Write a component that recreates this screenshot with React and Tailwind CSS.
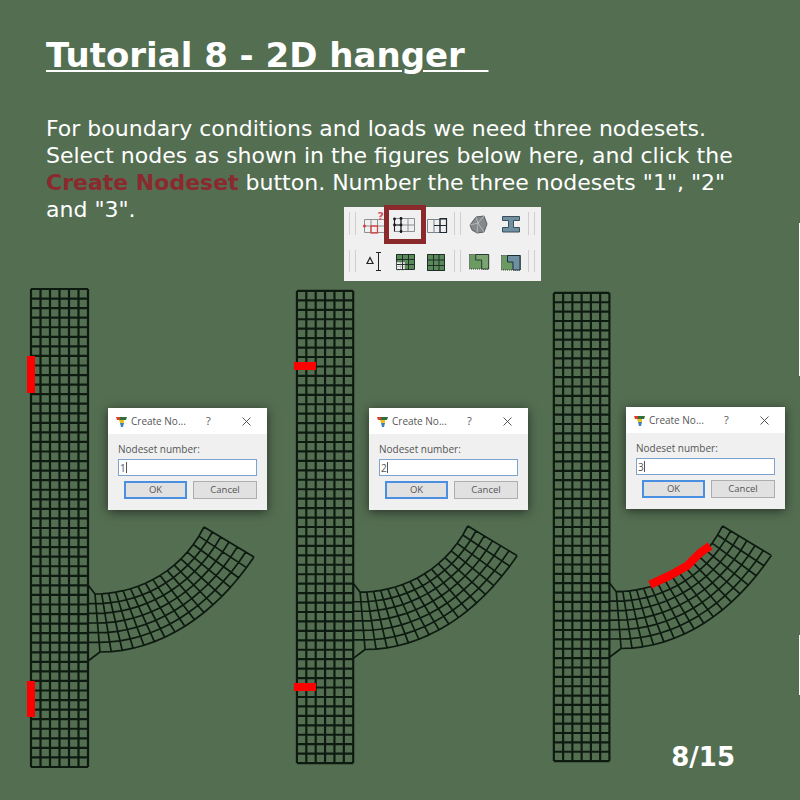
import React from 'react';

const MESH = '#0d1a10';

// cubic bezier point
const bez = (p, t) => {
  const u = 1 - t;
  return [0, 1].map(i =>
    u * u * u * p[0][i] + 3 * u * u * t * p[1][i] + 3 * u * t * t * p[2][i] + t * t * t * p[3][i]
  );
};

const TOP = [[95, 594], [130, 594], [178, 578], [204, 527]];
const BOTTOM = [[100, 652], [160, 652], [215, 615], [254, 557]];
const COLS = 16;
const ROWS = 6;

const buildBranch = () => {
  const lines = [];
  const node = (c, r) => {
    if (c === -1) {
      if (r === 0) return [88, 585];
      if (r === ROWS) return [88, 661];
      return [88, 594 + (58 * r) / ROWS];
    }
    const a = bez(TOP, c / COLS);
    const b = bez(BOTTOM, c / COLS);
    return [a[0] + ((b[0] - a[0]) * r) / ROWS, a[1] + ((b[1] - a[1]) * r) / ROWS];
  };
  for (let r = 0; r <= ROWS; r++) {
    const pts = [];
    for (let c = -1; c <= COLS; c++) pts.push(node(c, r).map(v => v.toFixed(1)).join(','));
    lines.push('M' + pts.join('L'));
  }
  for (let c = 0; c <= COLS; c++) {
    lines.push(`M${node(c, 0).join(',')}L${node(c, ROWS).join(',')}`);
  }
  return lines.join('');
};

const buildStrip = () => {
  let d = '';
  for (let c = 0; c <= 6; c++) {
    const x = 31 + c * 9.5;
    d += `M${x},289V767`;
  }
  for (let r = 0; r <= 50; r++) {
    const y = 289 + r * 9.56;
    d += `M31,${y}H88`;
  }
  return d;
};

const STRIP = buildStrip();
const BRANCH = buildBranch();

// drawn in the coordinates of the first figure, red selection passed as children
const Mesh = ({ children }) => (
  <svg className="h-full w-full" viewBox="25 283 240 490" preserveAspectRatio="none" fill="none">
    <path d={STRIP} stroke={MESH} strokeWidth="2.2" />
    <path d={BRANCH} stroke={MESH} strokeWidth="1.7" strokeLinejoin="round" />
    {children}
  </svg>
);

const Dialog = ({ value, className }) => (
  <div className={`absolute flex w-[159px] h-[102px] flex-col bg-[#f0f0f0] shadow-[0_2px_10px_rgba(0,0,0,0.55)] font-['Open_Sans',sans-serif] text-[9.5px] text-[#555] ${className}`}>
    <div className="flex h-[26px] items-center bg-white pl-2">
      <svg className="h-[11px] w-[11px]" viewBox="0 0 11 11">
        <path d="M0 1h4v3H1z" fill="#d8402c" />
        <path d="M4 1h7l-1 3H4z" fill="#2f6f3a" />
        <path d="M3 4h5v3H4z" fill="#e8c020" />
        <path d="M4 7h4l-1 4H5z" fill="#3f7fc0" />
      </svg>
      <span className="ml-[4px] w-[75px] text-[10px]">Create No...</span>
      <span className="w-[36px] text-[11px]">?</span>
      <svg className="h-[9px] w-[9px]" viewBox="0 0 9 9" stroke="#444" strokeWidth="0.9">
        <path d="M0.5 0.5l8 8M8.5 0.5l-8 8" />
      </svg>
    </div>
    <div className="flex flex-col px-[10px] pt-[8px]">
      <span className="h-[17px] leading-[14px] text-[10px]">Nodeset number:</span>
      <div className="flex h-[17px] items-center border border-[#7da2ce] bg-white pl-[1px] text-[10px] leading-none">
        {value}<span className="ml-[0.5px] h-[11px] w-px bg-[#555]" />
      </div>
      <div className="mt-[5px] flex gap-[6px] pl-[6px]">
        <div className="flex h-[18px] w-[63px] items-center justify-center border-2 border-[#4b8fe0] bg-[#e1e1e1] pt-px">OK</div>
        <div className="flex h-[18px] w-[64px] items-center justify-center border border-[#adadad] bg-[#e1e1e1] pt-px">Cancel</div>
      </div>
    </div>
  </div>
);

const Toolbar = () => (
  <div className="relative z-10 -mt-[16px] ml-[344px] h-[74px] w-[197px] bg-[#f0f0f0]">
    <svg className="h-full w-full" viewBox="0 0 197 74" fill="none">
      {/* separators */}
      <path d="M5.5 5v23M11.5 5v23M110.5 5v23M116.5 5v23M184.5 5v23M190.5 5v23M5.5 43v22M11.5 43v22M110.5 43v22M116.5 43v22M184.5 43v22M190.5 43v22" stroke="#cfcfcf" />
      {/* add nodeset */}
      <path d="M20.5 12.5h20v13h-20zM27 12.5v13M33.5 12.5v13M20.5 19h20" stroke="#8a8f92" />
      <rect x="27" y="19" width="6.5" height="7" stroke="#e0393a" strokeWidth="1.2" />
      <circle cx="20.5" cy="19" r="1.5" fill="#e0393a" />
      <text x="33.5" y="13" fontFamily="'DejaVu Sans',sans-serif" fontSize="11" fontWeight="700" fill="#d9555a">?</text>
      {/* create nodeset */}
      <path d="M50.5 11.5h20v13h-20zM57 11.5v13M64 11.5v13M50.5 18h20" stroke="#8a9094" />
      <path d="M50.5 11.5v13M57 10v16M50.5 18h7" stroke="#222" strokeWidth="1.1" />
      <circle cx="50.5" cy="12" r="1.4" fill="#1a1a1a" />
      <circle cx="50.5" cy="18" r="1.4" fill="#1a1a1a" />
      <circle cx="57" cy="11.5" r="1.4" fill="#1a1a1a" />
      <circle cx="57" cy="18" r="1.4" fill="#1a1a1a" />
      <circle cx="57" cy="24.5" r="1.4" fill="#1a1a1a" />
      {/* create elset */}
      <path d="M83.5 12.5h19v13h-19zM90 12.5v13M96 12.5v13" stroke="#7c8286" />
      <path d="M90 18.5h12.5M96 11.5h6.5v14H96zM96 11.5v14" stroke="#1f2a30" strokeWidth="1.2" />
      {/* rock */}
      <path d="M126 18l6-8 8-1 3 8-3 8-7 1-5-3z" fill="#85898c" stroke="#5c6063" />
      <path d="M132 10l2 6 6-7M134 16l-8 2M134 16l6 9M134 16l-1 10" stroke="#c9cccd" strokeWidth="0.7" />
      {/* I-beam */}
      <path d="M158.5 9.5h17v4h-6v7h6v4.5h-17V20.500h6v-7h-6z" fill="#6f8fa3" stroke="#3c4f5b" />
      {/* measure */}
      <path d="M26 50.500l3 6h-6z" stroke="#222" strokeWidth="1.2" />
      <path d="M32 45.500h5M34.500 45.500v18M32 63.500h5" stroke="#222" strokeWidth="1" />
      {/* green grid with selection */}
      <rect x="52" y="47" width="19" height="15" fill="#5a8a5a" />
      <rect x="52" y="55" width="9" height="8" fill="#f0f0f0" />
      <path d="M52.500 47.500h18v15h-18zM58.500 47.500v15M64.500 47.500v15M52.500 52.500h18M52.500 57.500h18" stroke="#1f2f28" />
      <path d="M52.500 55.500h8v7.500h-8zM52.500 59.500h8M56.500 55.500v8" stroke="#888" strokeWidth="0.7" strokeDasharray="1 1" />
      {/* green grid */}
      <rect x="83" y="47" width="18" height="17" fill="#5a8a5a" />
      <path d="M83.500 47.500h17v16h-17zM89.500 47.500v16M95 47.500v16M83.500 53h17M83.500 58.500h17" stroke="#1f2f28" />
      {/* split region, both parts green */}
      <path d="M125.500 47.500h19v14.500h-19z" fill="#6b9a62" stroke="#333" strokeDasharray="1 1" />
      <path d="M131.700 47.500h13v14.500h-7v-9h-6z" fill="#7aa571" stroke="#2a3a36" />
      {/* split region, blue part */}
      <path d="M157.500 48.500h19v14.500h-19z" fill="#6b9a62" stroke="#333" strokeDasharray="1 1" />
      <path d="M163.500 48.500h12.500v14.500h-7v-8h-5.500z" fill="#6f8fa3" stroke="#1f2f38" />
    </svg>
    <div className="absolute left-[40px] top-[-2px] h-[39px] w-[42px] border-[5px] border-[#8a2a2c]" />
  </div>
);

export default function App() {
  return (
    <div className="relative flex h-[800px] w-[800px] flex-col overflow-hidden bg-[#546e52] pt-[33px] font-['DejaVu_Sans',sans-serif] text-white">
      <h1 className="ml-[46px] h-[44px] text-[34px] font-bold leading-[44px] underline decoration-[2px] underline-offset-[3px] whitespace-pre">
        {'Tutorial 8 - 2D hanger\u00a0\u00a0'}
      </h1>
      <p className="ml-[46px] mt-[38px] w-[740px] text-[22px] leading-[27px]">
        For boundary conditions and loads we need three nodesets.<br />
        Select nodes as shown in the figures below here, and click the<br />
        <span className="font-bold text-[#8a2a2e]">Create Nodeset</span> button. Number the three nodesets "1", "2"<br />
        and "3".
      </p>

      <Toolbar />

      <div className="flex items-start pl-[25px] pt-[2px]">
        <div className="relative h-[490px] w-[240px]">
          <Mesh>
            <path d="M31 356v37M31 681v36" stroke="#ff0000" strokeWidth="8" />
          </Mesh>
          <Dialog value="1" className="left-[83px] top-[125px]" />
        </div>
        <div className="relative ml-[26px] mt-[2px] h-[484px] w-[237px]">
          <Mesh>
            <path d="M28 365h22.300M28 690h22.300" stroke="#ff0000" strokeWidth="8" />
          </Mesh>
          <Dialog value="2" className="left-[78px] top-[123px]" />
        </div>
        <div className="relative ml-[20px] mt-[4px] h-[480px] w-[234px]">
          <Mesh>
            <path d="M129.600 587l20.500-9.600 17.500-9.700 13.300-13.300 10.300-7.100" stroke="#ff0000" strokeWidth="8.500" strokeLinejoin="round" />
          </Mesh>
          <Dialog value="3" className="left-[78px] top-[120px]" />
        </div>
      </div>

      <div className="absolute bottom-[27px] right-[65px] text-[26px] font-bold leading-[32px]">8/15</div>

      {/* sliver of the next picture on the right edge */}
      <div className="absolute right-0 top-[223px] h-[153px] w-px bg-white" />
      <div className="absolute right-0 top-[635px] h-[60px] w-px bg-white" />
    </div>
  );
}
